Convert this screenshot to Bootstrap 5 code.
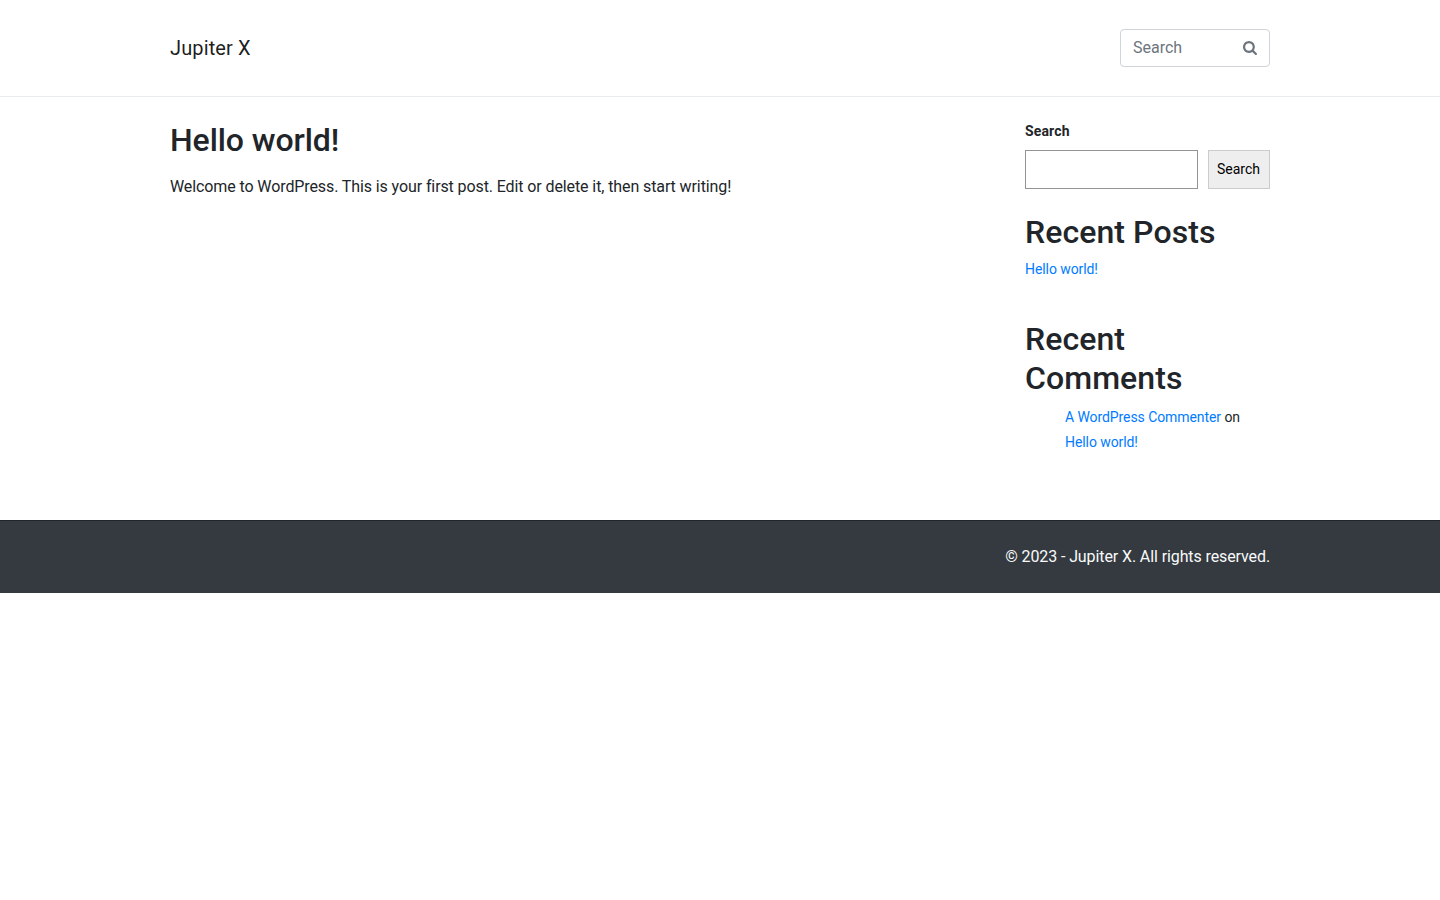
<!DOCTYPE html>
<html lang="en">
<head>
<meta charset="utf-8">
<meta name="viewport" content="width=device-width, initial-scale=1">
<title>Jupiter X</title>
<link href="https://cdn.jsdelivr.net/npm/bootstrap@5.3.0/dist/css/bootstrap.min.css" rel="stylesheet">
<style>
body { font-family: Roboto, sans-serif; color: #212529; background: #fff; }
a { color: #007bff; text-decoration: none; }
h1, h2 { font-size: 32px; line-height: 38.4px; font-weight: 500; }
h1 { letter-spacing: -.08px; }
h2 { letter-spacing: .08px; }
.container { max-width: 1140px; --bs-gutter-x: 40px; }
.row { --bs-gutter-x: 40px; }
.site-header { height: 97px; border-bottom: 1px solid #e9ecef; }
.site-header .navbar-brand { color: rgba(0, 0, 0, .9); letter-spacing: .12px; }
.header-search { width: 150px; }
.header-search .form-control { height: 38px; border-color: #ced4da; border-radius: 4px; padding: 5px 36px 7px 12px; }
.header-search .form-control::placeholder { color: #6c757d; }
.header-search .btn { padding: 0 13px; color: #6c757d; border: 0; }
.header-search svg { display: block; }
.post-body, .site-footer { letter-spacing: -.103px; }
.sidebar { font-size: 14px; }
.sidebar label { line-height: 21px; letter-spacing: .15px; }
.search-field { height: 39px; margin-right: 10px; border: 1px solid #949494; }
.search-submit { height: 39px; width: 62px; background: #eee; border: 1px solid #ccc; color: #000; padding: 0 1px 0 0; }
.post-list { margin-bottom: 40px; line-height: 21px; letter-spacing: -.08px; }
.comment-list { padding-left: 40px; padding-right: 20px; line-height: 25.2px; letter-spacing: -.08px; }
.main-area { height: 423px; }
.site-footer { background: #343a40; border-top: 1px solid #212529; color: #f8f9fa; }
</style>
</head>
<body>
<header class="site-header d-flex align-items-center">
  <div class="container d-flex align-items-center justify-content-between">
    <a class="navbar-brand m-0 fs-5" href="#">Jupiter X</a>
    <form class="header-search position-relative">
      <input class="form-control" type="text" placeholder="Search" aria-label="Search">
      <button class="btn position-absolute top-0 end-0 h-100" type="button" aria-label="Submit search">
        <svg width="14" height="15.08" viewBox="0 0 1664 1792" fill="currentColor"><path d="M1152 832q0-185-131.5-316.5t-316.5-131.5-316.5 131.5-131.5 316.5 131.5 316.5 316.5 131.5 316.5-131.5 131.5-316.5zm512 832q0 52-38 90t-90 38q-54 0-90-38l-343-342q-179 124-399 124-143 0-273.5-55.5t-225-150-150-225-55.5-273.5 55.5-273.5 150-225 225-150 273.5-55.5 273.5 55.5 225 150 150 225 55.5 273.5q0 220-124 399l343 343q37 37 37 90z"/></svg>
      </button>
    </form>
  </div>
</header>
<main class="main-area pt-4">
  <div class="container">
    <div class="row">
      <article class="col-9">
        <h1 class="mb-3">Hello world!</h1>
        <p class="post-body">Welcome to WordPress. This is your first post. Edit or delete it, then start writing!</p>
      </article>
      <aside class="col-3 sidebar">
        <form class="mb-4">
          <label class="d-block fw-bold mb-2" for="site-search">Search</label>
          <div class="d-flex">
            <input class="search-field flex-grow-1 w-100" id="site-search" type="text">
            <button class="search-submit flex-shrink-0" type="button">Search</button>
          </div>
        </form>
        <h2 class="mb-2">Recent Posts</h2>
        <ul class="post-list list-unstyled">
          <li><a href="#">Hello world!</a></li>
        </ul>
        <h2 class="mb-2">Recent Comments</h2>
        <ul class="comment-list list-unstyled">
          <li><a class="d-inline-block" href="#">A WordPress Commenter</a> on <a class="d-inline-block" href="#">Hello world!</a></li>
        </ul>
      </aside>
    </div>
  </div>
</main>
<footer class="site-footer py-4">
  <div class="container text-end">© 2023 - Jupiter X. All rights reserved.</div>
</footer>
<script src="https://cdn.jsdelivr.net/npm/bootstrap@5.3.0/dist/js/bootstrap.bundle.min.js"></script>
</body>
</html>
